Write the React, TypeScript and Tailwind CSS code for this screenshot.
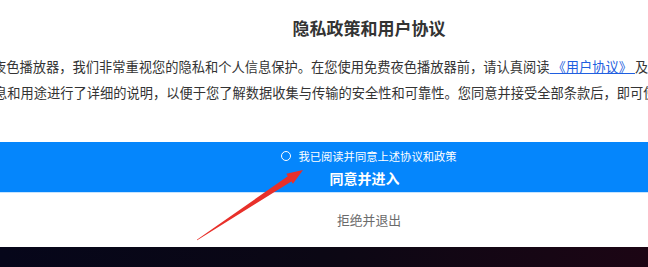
export default function App() {
  return (
    <div className="relative h-[267px] w-[648px] overflow-hidden bg-white font-['Noto_Sans_CJK_SC','Noto_Sans',sans-serif]">
      {/* dialog is wider than the window, clipped on both sides */}
      <div className="ml-[-100px] flex w-[938px] flex-col">
        <h1 className="h-[42px] pt-[14px] text-center text-[17px] leading-[28px] font-bold text-[#333]">
          隐私政策和用户协议
        </h1>
        <div className="h-[100px] pt-[12px] pl-[93px] text-[13.25px] leading-[26px] whitespace-nowrap text-[#333]">
          <p>
            夜色播放器，我们非常重视您的隐私和个人信息保护。在您使用免费夜色播放器前，请认真阅读
            <a className="text-[#1f5fe0] underline"> 《用户协议》 </a>及
            <a className="text-[#1f5fe0] underline"> 《隐私政策》</a>
          </p>
          <p className="ml-[1px]">
            息和用途进行了详细的说明，以便于您了解数据收集与传输的安全性和可靠性。您同意并接受全部条款后，即可使用
          </p>
        </div>

        <div className="flex h-[51px] flex-col items-center border-b border-[#c6e4ff] bg-[#0586fc] pt-[6px] text-white">
          <label className="flex h-[16px] items-center gap-[7px] text-[11.3px] leading-[16px]">
            <span className="h-[10px] w-[10px] rounded-full border border-white" />
            我已阅读并同意上述协议和政策
          </label>
          <button className="mt-[4px] mr-[9px] h-[20px] text-[14px] leading-[20px] font-semibold">
            同意并进入
          </button>
        </div>

        <div className="flex h-[54px] items-center justify-center">
          <button className="text-[12.8px] text-[#6b6b6b]">拒绝并退出</button>
        </div>
      </div>

      <div className="h-[20px] w-full bg-gradient-to-r from-[#06061a] via-[#0b0714] to-[#1c0514]" />

      {/* red annotation arrow */}
      <svg className="absolute top-[160px] left-[190px]" width="125" height="90" viewBox="0 0 125 90">
        <polygon
          points="6.83,79.75 97.8,16.2 96.33,13.81 113,10 102.95,23.83 101.3,21.4 7.17,80.25"
          fill="#e8302a"
        />
      </svg>
    </div>
  );
}
